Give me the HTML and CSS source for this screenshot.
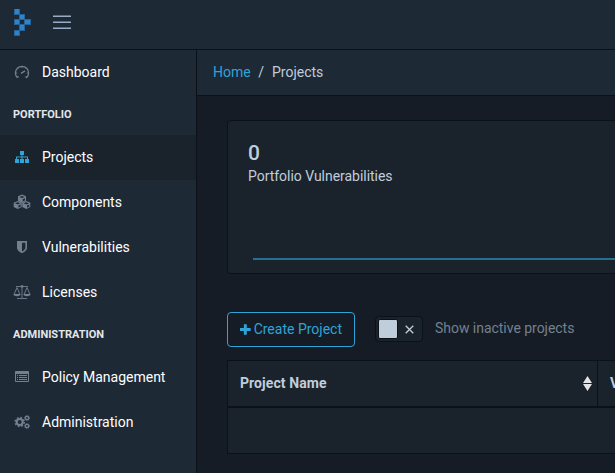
FILE: index.html
```html
<!DOCTYPE html>
<html lang="en">
<head>
<meta charset="utf-8">
<title>Projects</title>
<link rel="stylesheet" href="styles.css">
</head>
<body>
<header class="topbar">
  <svg class="logo" width="17" height="27" viewBox="0 0 17 27"><path fill="#23659a" d="M0 0h6v5h5v5h6v6h-6v6h-5v5H0v-6h5v-5H0v-6h5V6H0z"/><path fill="#3183c8" d="M1 0h4v5H1zM6 6h4v4H6zM1 11h4v4H1zM11 11h5v4h-5zM6 16h4v5H6zM1 22h4v4H1z"/><path fill="#1e2936" d="M6 11h4v4H6z"/></svg>
  <svg class="burger" width="18" height="16" viewBox="0 0 18 16"><path stroke="#96adc5" stroke-width="1.4" d="M0 2.300h18M0 8.300h18M0 14.300h18"/></svg>
</header>
<div class="body">
  <nav class="sidebar">
    <a class="item"><svg class="icon" viewBox="0 0 18 16"><g fill="none" stroke="currentColor"><path d="M4.3 13.6A6.6 6.6 0 1 1 13.7 13.6l-1.300-1M4.300 13.600l1.300-1" stroke-width="1.200"/><path d="M9 2v2M4.300 4l1 1M13.700 4l-1 1M2.500 9h1.700M13.800 9h1.700" stroke-width=".9"/><path d="M8 9.400l4-2.500" stroke-width="1.500"/></g></svg>Dashboard</a>
    <div class="title">PORTFOLIO</div>
    <a class="item active"><svg class="icon" viewBox="0 0 18 16"><path fill="currentColor" d="M7 2h4v4H9.500v1.500H15V10h1v4h-4v-4h2V8.500H9.500V10H11v4H7v-4h1.500V8.500H4V10h2v4H2v-4h1V7.500h5.500V6H7z"/></svg>Projects</a>
    <a class="item"><svg class="icon" viewBox="0 0 18 16"><g fill="currentColor"><path d="M9 .6l4 1.700v4.500L9 8.700 5 6.800V2.300zM4.700 7l4 1.700v4.300l-4 2-4-2V8.700zM13.300 7l4 1.700v4.300l-4 2-4-2V8.700z"/></g><g class="cut"><path d="M6.300 3l2.700 1.100L11.700 3 9 2zM2 9.300l2.700 1.100 2.700-1.100-2.700-1zM10.600 9.300l2.700 1.100L16 9.300l-2.700-1zM9.700 5.200l2.300-1v2l-2.300 1.200zM5.400 11.500l2.300-1v2l-2.300 1.200zM14 11.500l2.300-1v2L14 13.700z"/></g></svg>Components</a>
    <a class="item"><svg class="icon" viewBox="0 0 18 16"><path fill="currentColor" fill-rule="evenodd" d="M4 2h10v6.500c0 3-2.700 4.700-5 5.700-2.300-1-5-2.700-5-5.700zM9 3.700v8.700c1.700-.9 3.400-2.100 3.400-3.900V3.700z"/></svg>Vulnerabilities</a>
    <a class="item"><svg class="icon" viewBox="0 0 18 16"><g fill="none" stroke="currentColor"><path d="M3 2.500h12M9 1v13M4 14.500h10M1 10.500l3-7 3 7M11 10.500l3-7 3 7" stroke-width=".9"/></g><path fill="currentColor" d="M.5 10h7c0 3-7 3-7 0zM10.500 10h7c0 3-7 3-7 0zM7.700 1.500h2.600v2H7.700z"/></svg>Licenses</a>
    <div class="title">ADMINISTRATION</div>
    <a class="item"><svg class="icon" viewBox="0 0 18 16"><path fill="currentColor" fill-rule="evenodd" d="M3 2h12q1 0 1 1v9q0 1-1 1H3q-1 0-1-1V3q0-1 1-1zM3 5v7h12V5zM4 6h1v1H4zM6 6h8v1H6zM4 8h1v1H4zM6 8h8v1H6zM4 10h1v1H4zM6 10h8v1H6z"/></svg>Policy Management</a>
    <a class="item"><svg class="icon" viewBox="0 0 18 16"><g fill="none" stroke="currentColor"><circle cx="6.700" cy="8" r="3" stroke-width="2"/><circle cx="6.700" cy="8" r="4.500" stroke-width="1.500" stroke-dasharray="1.770 1.770"/><circle cx="14" cy="4" r="1.700" stroke-width="1.300"/><circle cx="14" cy="4" r="2.500" stroke-width=".8" stroke-dasharray="1 1"/><circle cx="14" cy="12" r="1.700" stroke-width="1.300"/><circle cx="14" cy="12" r="2.500" stroke-width=".8" stroke-dasharray="1 1"/></g></svg>Administration</a>
  </nav>
  <main class="main">
    <div class="breadcrumb"><a class="link">Home</a><span class="slash">/</span><span>Projects</span></div>
    <section class="card">
      <div class="count">0</div>
      <div class="label">Portfolio Vulnerabilities</div>
      <div class="chart"></div>
    </section>
    <div class="toolbar">
      <button class="create"><svg width="11" height="11" viewBox="0 0 11 11"><path fill="currentColor" d="M4 0h3v4h4v3H7v4H4V7H0V4h4z"/></svg>Create Project</button>
      <div class="switch"><span class="knob"></span><svg width="9" height="9" viewBox="0 0 9 9"><path stroke="#c5ced6" stroke-width="1.300" d="M.7.7l7.600 7.600M8.300.7L.7 8.300"/></svg></div>
      <span class="muted">Show inactive projects</span>
    </div>
    <div class="table">
      <div class="row head"><div class="cell name">Project Name<svg width="9" height="15" viewBox="0 0 9 15"><path fill="#e1e3e4" d="M4.500 0L9 7H0zM0 8h9l-4.500 7z"/></svg></div><div class="cell">Version</div></div>
      <div class="row empty"></div>
    </div>
  </main>
</div>
</body>
</html>
```
FILE: styles.css
```css
* { box-sizing: border-box; }
body { margin: 0; width: 615px; height: 473px; overflow: hidden; background: #161c25; color: #c0cddb; font: 14px/21px Roboto, sans-serif; }
.topbar { height: 50px; display: flex; align-items: flex-start; padding: 9px 14px; background: #1e2936; border-bottom: 1px solid #0b1117; }
.burger { margin: 5px 0 0 22px; }
.body { display: flex; height: 423px; }
.sidebar { flex: 0 0 197px; background: #1e2936; border-right: 1px solid #0b1117; }
.item { display: flex; align-items: center; height: 45px; padding-left: 13px; color: #fff; }
.icon { width: 18px; height: 16px; margin: 0 11px 2px 0; color: #73818f; }
.cut { fill: #1e2936; }
.active { background: #1a232c; }
.active .icon { color: #2fa4d7; }
.title { height: 40px; padding: 9px 13px; font-size: 11px; font-weight: 700; color: #e4e7ea; }
.main { flex: 1 1 0; min-width: 0; overflow: hidden; }
.breadcrumb { display: flex; height: 46px; padding: 12px 16px; background: #1e2936; border-bottom: 1px solid #0b1117; }
.link { color: #2fa4d7; }
.slash { margin: 0 8px 0 7.500px; }
.card { width: 800px; height: 154px; margin: 24px 0 0 30px; padding: 20px; background: #1a232c; border: 1px solid #0b1117; border-radius: 4px; }
.count { font-size: 21px; line-height: 25px; font-weight: 500; }
.label { line-height: 21px; letter-spacing: -.03px; }
.chart { height: 73px; margin-left: 5px; border-bottom: 2px solid #256f92; }
.toolbar { display: flex; align-items: center; margin: 38px 0 0 30px; height: 35px; }
.create { display: flex; align-items: center; gap: 3px; width: 128px; height: 35px; padding: 0 12px; white-space: nowrap; color: #2fa4d7; background: none; border: 1px solid #2fa4d7; border-radius: 4px; font: inherit; }
.switch { display: flex; align-items: center; width: 48px; height: 26px; margin: 0 12px 1px 20px; padding-left: 2px; gap: 7px; background: #1a232c; border: 1px solid #0b1117; border-radius: 4px; }
.knob { width: 20px; height: 20px; background: #c0cddb; border: 1px solid #0b1117; border-radius: 2px; }
.muted { margin-bottom: 2px; color: #73818f; letter-spacing: -.03px; }
.table { width: 800px; margin: 13px 0 0 30px; background: #1a232c; border: 1px solid #0b1117; }
.row { display: flex; height: 45px; }
.head { height: 47px; border-bottom: 2px solid #0b1117; font-weight: 700; }
.cell { display: flex; align-items: center; padding: 0 12px; }
.name { flex: 0 0 370px; justify-content: space-between; padding-right: 5px; border-right: 1px solid #0b1117; letter-spacing: .08px; }
```
